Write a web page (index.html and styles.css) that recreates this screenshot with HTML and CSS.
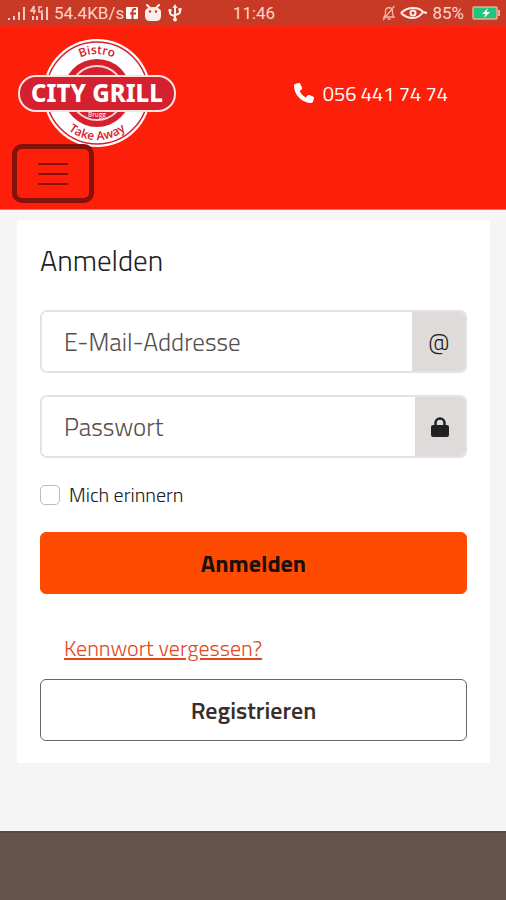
FILE: index.html
```html
<!DOCTYPE html>
<html lang="de">
<head>
  <meta charset="UTF-8">
  <meta name="viewport" content="width=device-width, initial-scale=1">
  <title>City Grill - Anmelden</title>
  <link rel="stylesheet" href="styles.css">
</head>
<body>
  <!-- Status bar -->
  <div class="status-bar">
    <div class="status-left">
      <svg width="44" height="16" viewBox="0 0 44 16" fill="#f6c9c0">
        <path d="M0 13h2v2H0zM5 11h2v4H5zM10 7h2v8h-2zM15 2h2v13h-2zM28 11h2v4h-2zM33 8h2v7h-2zM38 2h2v13h-2zM24 11h2v4h-2z"/>
        <path d="M26 1l-3 5h5M26 1v8M34 2h-3v5h3V5" fill="none" stroke="#f6c9c0" stroke-width="1.500"/>
      </svg>
      <span>54.4KB/s</span>
      <svg width="12" height="12" viewBox="0 0 12 12">
        <rect width="12" height="12" rx="1" fill="#fff"/>
        <path d="M10 2H9C7 2 6.500 3 6.500 4v8M4 6.500h6" fill="none" stroke="#c93a26" stroke-width="2"/>
      </svg>
      <svg class="icon-robot" width="18" height="18" viewBox="0 0 18 18">
        <path d="M3 1l3 3M15 1l-3 3" stroke="#fdeeea" stroke-width="2" stroke-linecap="round"/>
        <path d="M1 7Q3 3 9 3t8 4v5q0 5-5 5H6q-5 0-5-5z" fill="#fdeeea"/>
        <circle cx="6" cy="7.500" r="1.200" fill="#c93a26"/>
        <circle cx="12" cy="7.500" r="1.200" fill="#c93a26"/>
      </svg>
      <svg class="icon-usb" width="14" height="18" viewBox="0 0 14 18" fill="none" stroke="#fdeeea" stroke-width="2">
        <path d="M7 3v12M2 6v3q0 2 5 3M12 5v3q0 2-5 3"/>
        <path d="M7 0l2.500 4h-5zM.5 5h3v3h-3zM10.500 4h3v3h-3z" fill="#fdeeea" stroke="none"/>
        <circle cx="7" cy="15.500" r="2" fill="#fdeeea" stroke="none"/>
      </svg>
    </div>
    <span>11:46</span>
    <div class="status-right">
      <svg width="14" height="16" viewBox="0 0 14 16" fill="none" stroke="#f3b5a9" stroke-width="1.300">
        <path d="M2 12h10q-1.500-1.500-1.500-4V6q0-3-3.500-3.500Q3.500 3 3.500 6v2q0 2.500-1.500 4zM5.500 14h3M12.500 1L1 15"/>
      </svg>
      <svg width="28" height="14" viewBox="0 0 28 14" fill="none" stroke="#fdeeea" stroke-width="2">
        <path d="M1 7Q6 2 13 2q7 0 10 4l4 1M1 7q5 5 12 5 6 0 10-6"/>
        <circle cx="13" cy="7" r="2.500"/>
      </svg>
      <span>85%</span>
      <svg width="28" height="14" viewBox="0 0 28 14">
        <rect x="1" y="1" width="24" height="12" rx="1" fill="#1fc77e" stroke="#f0a898" stroke-width="1.500"/>
        <path d="M26 4h2v6h-2z" fill="#f0a898"/>
        <path d="M16 2l-6 6h3.500L12 12l6-6h-3.500z" fill="#fff"/>
      </svg>
    </div>
  </div>

  <!-- Header -->
  <header class="header">
    <div class="header-top">
      <a class="logo" href="#" aria-label="City Grill">
        <svg width="160" height="110" viewBox="0 0 160 110">
          <defs>
            <path id="arc-top" d="M41 55a39 39 0 0 1 78 0"/>
            <path id="arc-bottom" d="M33 55a47 47 0 0 0 94 0"/>
          </defs>
          <circle cx="80" cy="55" r="54" fill="#fff"/>
          <circle cx="80" cy="55" r="51" fill="#fff" stroke="#d5202f" stroke-width="1.500"/>
          <circle cx="80" cy="55" r="34" fill="#d5202f"/>
          <circle cx="80" cy="55" r="27" fill="none" stroke="#fbd5d2" stroke-width="2"/>
          <rect x="2" y="38" width="156" height="35" rx="17" fill="#d5202f" stroke="#ffe3de" stroke-width="2"/>
          <text class="logo-name" x="80" y="64" text-anchor="middle">CITY GRILL</text>
          <text class="logo-small" x="80" y="79" text-anchor="middle">Brugg</text>
          <text class="logo-ring"><textPath href="#arc-top" startOffset="50%" text-anchor="middle">Bistro</textPath></text>
          <text class="logo-ring"><textPath href="#arc-bottom" startOffset="50%" text-anchor="middle">Take Away</textPath></text>
        </svg>
      </a>
      <a class="phone" href="tel:0564417474">
        <svg width="20" height="20" viewBox="0 0 512 512" fill="#fff">
          <path d="M164.900 24.600c-7.700-18.600-28-28.500-47.400-23.200l-88 24C12.100 30.200 0 46 0 64c0 247.400 200.600 448 448 448 18 0 33.800-12.100 38.600-29.500l24-88c5.300-19.400-4.600-39.700-23.200-47.400l-96-40c-16.300-6.800-35.200-2.100-46.300 11.600L304.700 368C234.300 334.700 177.300 277.700 144 207.300l49.300-40.400c13.700-11.200 18.400-30 11.600-46.300z"/>
        </svg>
        <span>056 441 74 74</span>
      </a>
    </div>
    <button class="menu-toggle" type="button" aria-label="Menu">
      <svg width="30" height="24" viewBox="0 0 30 24" stroke="#86100a" stroke-width="2" stroke-linecap="round">
        <path d="M1 2h28M1 12h28M1 22h28"/>
      </svg>
    </button>
  </header>

  <!-- Login form -->
  <main class="content">
    <form class="card">
      <h1>Anmelden</h1>

      <div class="input-group">
        <input type="email" placeholder="E-Mail-Addresse" aria-label="E-Mail-Addresse">
        <span class="addon">@</span>
      </div>

      <div class="input-group">
        <input type="password" placeholder="Passwort" aria-label="Passwort">
        <span class="addon">
          <svg width="18" height="20" viewBox="0 0 18 20">
            <path d="M4.500 9V6a4.500 4.500 0 0 1 9 0v3" fill="none" stroke="#212121" stroke-width="2.500"/>
            <rect y="8" width="18" height="12" rx="2" fill="#212121"/>
          </svg>
        </span>
      </div>

      <div class="remember">
        <input type="checkbox" id="remember">
        <label for="remember">Mich erinnern</label>
      </div>

      <button class="btn btn-primary" type="submit">Anmelden</button>
      <a class="forgot" href="#">Kennwort vergessen?</a>
      <button class="btn btn-outline" type="button">Registrieren</button>
    </form>
  </main>

  <footer class="footer"></footer>
</body>
</html>
```

FILE: styles.css
```css
* {
  box-sizing: border-box;
}
body {
  margin: 0;
  min-height: 100vh;
  display: flex;
  flex-direction: column;
  background: #f5f5f5;
  color: #212121;
  font-family: "Titillium Web", Lato, sans-serif;
  font-weight: 300;
}
svg {
  display: block;
  flex-shrink: 0;
}
button, input {
  font-family: inherit;
}

/* Status bar */
.status-bar {
  display: grid;
  grid-template-columns: 1fr auto 1fr;
  align-items: center;
  height: 26px;
  padding: 0 6px 0 8px;
  background: #c93a26;
  color: #f9d5cd;
  font-family: Roboto, sans-serif;
  font-size: 17px;
  font-weight: 400;
}
.status-left, .status-right {
  display: flex;
  align-items: center;
  gap: 4px;
}
.status-left {
  gap: 2px;
}
.icon-robot {
  margin-left: 4px;
}
.icon-usb {
  margin-left: 4px;
}
.status-right {
  justify-content: flex-end;
}
.status-right span {
  margin-right: 4px;
}

/* Header */
.header {
  padding: 12px 12px 6px;
  background: #fd1f0a;
  border-bottom: 1px solid #e8786a;
}
.header-top {
  display: flex;
  align-items: center;
  justify-content: space-between;
  padding: 0 46px 0 5px;
}
.logo-name {
  fill: #fff;
  font-family: "Noto Sans", sans-serif;
  font-size: 24px;
  font-weight: 800;
}
.logo-ring {
  fill: #d5202f;
  font-family: "Open Sans", sans-serif;
  font-size: 12px;
  font-weight: 600;
}
.logo-small {
  fill: #fbd5d2;
  font-size: 7px;
  font-weight: 600;
}
.phone {
  display: flex;
  align-items: center;
  gap: 9px;
  color: #fff;
  font-size: 20px;
  font-weight: 400;
  text-decoration: none;
}
.menu-toggle {
  display: flex;
  align-items: center;
  justify-content: center;
  width: 82px;
  height: 59px;
  margin-top: -4px;
  padding: 0;
  position: relative;
  background: transparent;
  border: 5px solid #86100a;
  border-radius: 10px;
}

/* Login form */
.content {
  flex: 1;
  padding: 10px 16px 68px 17px;
}
.card {
  display: flex;
  flex-direction: column;
  padding: 20px 23px 22px;
  background: #fff;
}
h1 {
  margin: 0 0 30px;
  font-size: 29px;
  font-weight: 300;
  line-height: 40px;
}
.input-group {
  display: flex;
  height: 63px;
  margin-bottom: 22px;
  border: 2px solid #e3e3e3;
  border-radius: 7px;
  overflow: hidden;
}
.input-group input {
  flex: 1;
  min-width: 0;
  padding: 0 22px;
  border: 0;
  background: #fff;
  font-size: 25px;
  font-weight: 300;
}
.input-group input::placeholder {
  color: #55504e;
}
.addon {
  display: flex;
  align-items: center;
  justify-content: center;
  padding: 0 16px;
  background: #dfdbda;
  font-size: 21px;
}
.remember {
  display: flex;
  align-items: center;
  gap: 9px;
  margin: 5px 0 27px;
  font-size: 20px;
  line-height: 20px;
}
.remember input {
  appearance: none;
  width: 20px;
  height: 20px;
  margin: 0;
  border: 1px solid #bbb;
  border-radius: 5px;
}
.btn {
  height: 62px;
  border-radius: 6px;
  font-size: 24px;
}
.btn-primary {
  background: #ff4b00;
  border: 1px solid #ff4b00;
  color: #1c0e08;
  font-weight: 700;
}
.btn-outline {
  background: #fff;
  border: 1px solid #666;
  color: #3a2d2a;
  font-weight: 600;
}
.forgot {
  align-self: flex-start;
  margin: 39px 24px 16px;
  color: #e0481c;
  font-size: 22px;
  line-height: 30px;
}

.footer {
  height: 69px;
  background: #65534b;
  border-top: 2px solid #544a45;
}
```
